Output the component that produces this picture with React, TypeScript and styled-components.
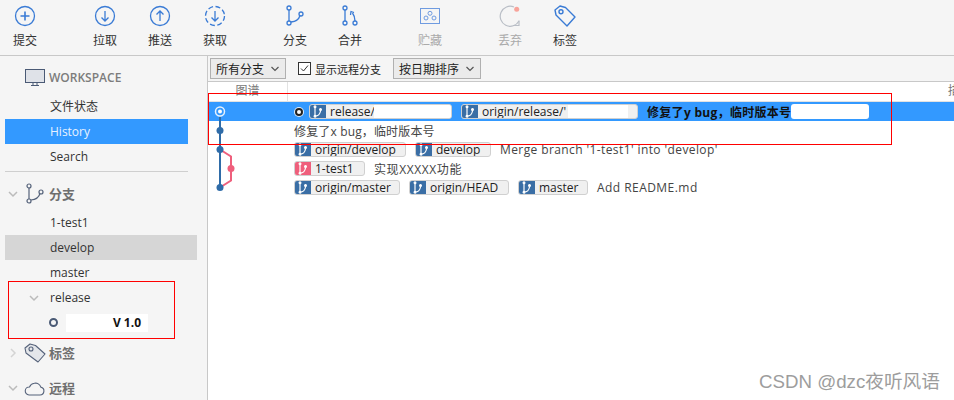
import React from "react";
import styled, { createGlobalStyle } from "styled-components";

const FONT = `"Open Sans", "Noto Sans CJK SC", sans-serif`;
const BLUE = "#3a7bd5";
const LINE = "#2f6ca8";
const PINK = "#ef5f7c";

const GlobalStyle = createGlobalStyle`
  html, body { margin: 0; padding: 0; background: #fff; }
  body { font-family: ${FONT}; font-size: 12px; color: #333; }
`;

const Page = styled.div`
  position: relative;
  width: 954px;
  height: 400px;
  overflow: hidden;
  background: #fff;
`;

const Toolbar = styled.div`
  display: flex;
  height: 55px;
  background: #f5f5f5;
  border-bottom: 1px solid #c8c8c8;
`;

const ToolButton = styled.div<{ $gap: number; $off?: boolean }>`
  display: flex;
  flex-direction: column;
  align-items: center;
  width: 50px;
  height: 55px;
  margin-left: ${(p) => p.$gap}px;
  color: ${(p) => (p.$off ? "#aaa" : "#333")};
  svg { display: block; width: 30px; height: 30px; margin-top: 1px; }
`;

const ToolLabel = styled.span`
  margin-top: 1px;
  line-height: 18px;
`;

const Body = styled.div`
  display: flex;
  height: 344px;
`;

const Sidebar = styled.div`
  width: 208px;
  flex: none;
  box-sizing: border-box;
  background: #f5f5f5;
  border-right: 1px solid #c8c8c8;
  padding: 8px 0 0 5px;
`;

const WorkspaceHead = styled.div`
  display: flex;
  align-items: center;
  height: 26px;
  padding-left: 20px;
  font-weight: 600;
  color: #7c7c7c;
  gap: 4px;
  margin-bottom: 4px;
  svg { width: 20px; height: 20px; }
`;

const SideItem = styled.div<{ $on?: "blue" | "grey" }>`
  height: 25px;
  line-height: 25px;
  padding-left: 45px;
  width: ${(p) => (p.$on === "blue" ? 183 : 192)}px;
  box-sizing: border-box;
  background: ${(p) => (p.$on === "blue" ? "#3399ff" : p.$on === "grey" ? "#d6d6d6" : "transparent")};
  color: ${(p) => (p.$on === "blue" ? "#e8f2ff" : "#333")};
`;

const SideRule = styled.div`
  width: 183px;
  height: 1px;
  margin-top: 2px;
  background: #cfcfcf;
`;

const GroupHead = styled.div<{ $top: number; $bottom?: number }>`
  display: flex;
  align-items: center;
  height: 26px;
  margin-top: ${(p) => p.$top}px;
  margin-bottom: ${(p) => p.$bottom ?? 0}px;
  padding-left: 2px;
  font-size: 13px;
  font-weight: 600;
  color: #6f6f6f;
  svg { flex: none; }
`;

const GroupIcon = styled.svg`
  width: 30px;
  height: 30px;
  margin: -2px 0;
`;

const GroupLabel = styled.span`
  margin: -2px 0 0 -1px;
`;

const Chevron = styled.svg`
  width: 12px;
  height: 12px;
  margin-right: 1px;
`;

const ReleaseItem = styled(SideItem)`
  display: flex;
  align-items: center;
  padding-left: 23px;
`;

const ReleaseChevron = styled(Chevron)`
  margin-right: 10px;
`;

const BranchTip = styled.div`
  display: flex;
  align-items: center;
  height: 25px;
  padding-left: 44px;
`;

const Ring = styled.span`
  width: 5px;
  height: 5px;
  border: 2px solid #4a5a75;
  border-radius: 50%;
  background: #f5f5f5;
`;

const TipName = styled.span`
  display: flex;
  justify-content: flex-end;
  align-items: center;
  width: 82px;
  height: 18px;
  margin-left: 8px;
  background: #fff;
  font-weight: 700;
  color: #111;
  padding-right: 7px;
  box-sizing: border-box;
`;

const Main = styled.div`
  flex: 1;
  min-width: 0;
  background: #fff;
`;

const FilterBar = styled.div`
  display: flex;
  align-items: center;
  height: 25px;
  padding-left: 2px;
  background: #f5f5f5;
  border-bottom: 1px solid #c8c8c8;
`;

const Select = styled.div<{ $w: number; $gap?: number }>`
  display: flex;
  align-items: center;
  justify-content: space-between;
  width: ${(p) => p.$w}px;
  height: 21px;
  margin-left: ${(p) => p.$gap ?? 0}px;
  padding: 0 5px;
  box-sizing: border-box;
  background: #ebebeb;
  border: 1px solid #b0b0b0;
  color: #222;
`;

const Check = styled.span`
  display: flex;
  align-items: center;
  justify-content: center;
  width: 13px;
  height: 13px;
  margin-left: 12px;
  border: 1px solid #333;
  background: #fff;
  box-sizing: border-box;
`;

const CheckLabel = styled.span`
  margin-left: 4px;
  font-size: 11px;
  color: #222;
`;

const TableHead = styled.div`
  display: flex;
  height: 19px;
  line-height: 18px;
  color: #777;
  border-bottom: 1px solid #e2e2e2;
`;

const GraphHead = styled.div`
  width: 79px;
  flex: none;
  text-align: center;
  border-right: 1px solid #e2e2e2;
`;

const DescHead = styled.div`
  flex: 1;
  min-width: 0;
  padding-left: 660px;
  white-space: nowrap;
  overflow: hidden;
`;

const Row = styled.div<{ $sel?: boolean }>`
  display: flex;
  align-items: center;
  height: 19px;
  background: ${(p) => (p.$sel ? "#3399ff" : "transparent")};
`;

const GraphCell = styled.svg`
  flex: none;
  width: 86px;
  height: 19px;
  display: block;
`;

const HeadDot = styled.span`
  width: 4px;
  height: 4px;
  margin: 0 6px 0 1px;
  border: 2.5px solid #222;
  border-radius: 50%;
  background: #fff;
  box-shadow: 0 0 0 1px #dcebfb;
`;

const Pill = styled.span<{ $w: number }>`
  position: relative;
  display: flex;
  align-items: center;
  flex: none;
  width: ${(p) => p.$w}px;
  height: 15px;
  margin-right: 9px;
  box-sizing: border-box;
  background: #f0f0f0;
  border: 1px solid #d0d0d0;
  border-radius: 3px;
  overflow: hidden;
  color: #222;
  white-space: nowrap;
`;

const PillIcon = styled.span<{ $pink?: boolean }>`
  display: flex;
  align-items: center;
  justify-content: center;
  flex: none;
  width: 17px;
  height: 15px;
  margin: 0 4px 0 -1px;
  background: ${(p) => (p.$pink ? PINK : "#3a6ea5")};
`;

const Blot = styled.span<{ $left: number; $w: number }>`
  position: absolute;
  top: 0;
  bottom: 0;
  left: ${(p) => p.$left}px;
  width: ${(p) => p.$w}px;
  background: #fff;
`;

const Subject = styled.span<{ $bold?: boolean; $ls?: number }>`
  white-space: nowrap;
  font-weight: ${(p) => (p.$bold ? 700 : 400)};
  letter-spacing: ${(p) => p.$ls ?? 0}px;
  color: ${(p) => (p.$bold ? "#111" : "#444")};
`;

const SubjectBlot = styled.span`
  width: 78px;
  height: 15px;
  background: #fff;
  border-radius: 3px;
`;

const RedBox = styled.div<{ $x: number; $y: number; $w: number; $h: number }>`
  position: absolute;
  left: ${(p) => p.$x}px;
  top: ${(p) => p.$y}px;
  width: ${(p) => p.$w}px;
  height: ${(p) => p.$h}px;
  box-sizing: border-box;
  border: 1px solid #f00;
  pointer-events: none;
`;

const Watermark = styled.div`
  position: absolute;
  right: 14px;
  bottom: 7px;
  font-family: "Liberation Sans", "Noto Sans CJK SC", sans-serif;
  font-size: 18.7px;
  color: #9d9d9d;
`;

const BranchPaths = () => (
  <>
    <circle cx="9" cy="7" r="2" />
    <circle cx="9" cy="22" r="2" />
    <circle cx="21" cy="13" r="2" />
    <path d="M9 9v11M11 21c5-.5 8-3 9-6.500" />
  </>
);

const PillBranch = () => (
  <svg width="11" height="13" viewBox="0 0 11 13" fill="none" stroke="#fff" strokeWidth="1.2">
    <path d="M3 1.500v10M3 11c3 0 5-2 5.500-5" />
    <circle cx="3" cy="1.800" r="0.900" fill="#fff" />
    <circle cx="3" cy="11.200" r="0.900" fill="#fff" />
    <circle cx="8.500" cy="4.500" r="0.900" fill="#fff" />
  </svg>
);

const Caret = () => (
  <svg width="10" height="6" viewBox="0 0 10 6" fill="none" stroke="#555" strokeWidth="1.2">
    <path d="M1.500 1l3.500 3.500L8.500 1" />
  </svg>
);

const OpenChevron = () => (
  <path d="M2 4l4 4 4-4" />
);

const Tag = ({ name, w, pink, blot }: { name: string; w: number; pink?: boolean; blot?: [number, number] }) => (
  <Pill $w={w}>
    <PillIcon $pink={pink}>
      <PillBranch />
    </PillIcon>
    {name}
    {blot && <Blot $left={blot[0]} $w={blot[1]} />}
  </Pill>
);

const tools = [
  {
    label: "提交",
    gap: 0,
    icon: (
      <svg viewBox="0 0 30 30" fill="none" stroke={BLUE} strokeWidth="1.3">
        <circle cx="15" cy="15" r="9.500" />
        <path d="M15 10.500v9M10.500 15h9" strokeWidth="1.6" />
      </svg>
    ),
  },
  {
    label: "拉取",
    gap: 30,
    icon: (
      <svg viewBox="0 0 30 30" fill="none" stroke={BLUE} strokeWidth="1.3">
        <circle cx="15" cy="15" r="9.500" />
        <path d="M15 10v9.500M11.500 16.500l3.500 3.500 3.500-3.500" />
      </svg>
    ),
  },
  {
    label: "推送",
    gap: 5,
    icon: (
      <svg viewBox="0 0 30 30" fill="none" stroke={BLUE} strokeWidth="1.3">
        <circle cx="15" cy="15" r="9.500" />
        <path d="M15 20v-9.500M11.500 13.500l3.500-3.500 3.500 3.500" />
      </svg>
    ),
  },
  {
    label: "获取",
    gap: 5,
    icon: (
      <svg viewBox="0 0 30 30" fill="none" stroke={BLUE} strokeWidth="1.3">
        <circle cx="15" cy="15" r="9.500" strokeDasharray="5 2.500" />
        <path d="M15 10v9.500M11.500 16.500l3.500 3.500 3.500-3.500" />
      </svg>
    ),
  },
  {
    label: "分支",
    gap: 30,
    icon: (
      <svg viewBox="0 0 30 30" fill="none" stroke={BLUE} strokeWidth="1.3">
        <BranchPaths />
      </svg>
    ),
  },
  {
    label: "合并",
    gap: 5,
    icon: (
      <svg viewBox="0 0 30 30" fill="none" stroke={BLUE} strokeWidth="1.3">
        <circle cx="10" cy="7" r="2" />
        <circle cx="10" cy="22" r="2" />
        <circle cx="20" cy="22" r="2" />
        <path d="M10 9v11M20 20c0-4-1-6-2.500-8M15.500 14l.5-3.500 3 1" />
      </svg>
    ),
  },
  {
    label: "贮藏",
    gap: 30,
    off: true,
    icon: (
      <svg viewBox="0 0 30 30" fill="none" stroke="#6f9be0" strokeWidth="1">
        <rect x="5.500" y="7.500" width="19" height="15" />
        <circle cx="15" cy="12.300" r="2" />
        <circle cx="11" cy="17" r="2" />
        <circle cx="19" cy="17" r="2" />
      </svg>
    ),
  },
  {
    label: "丢弃",
    gap: 30,
    off: true,
    icon: (
      <svg viewBox="0 0 30 30" fill="none" stroke="#b9bec6" strokeWidth="1.2">
        <path d="M19 6a10 10 0 1 0 5 14" />
        <path d="M18 24.500h6v-5" />
        <circle cx="21.700" cy="8.300" r="2.500" fill="#f8a39a" stroke="none" />
      </svg>
    ),
  },
  {
    label: "标签",
    gap: 5,
    icon: (
      <svg viewBox="0 0 30 30" fill="none" stroke={BLUE} strokeWidth="1.4">
        <path d="M5 9l5-4 5.500 1.500L25 16l-8 9L6 14z" strokeLinejoin="round" />
        <circle cx="11" cy="10.700" r="2" />
      </svg>
    ),
  },
];

const App = () => {
  return (
    <Page>
      <GlobalStyle />
      <Toolbar>
        {tools.map((t) => (
          <ToolButton key={t.label} $gap={t.gap} $off={t.off}>
            {t.icon}
            <ToolLabel>{t.label}</ToolLabel>
          </ToolButton>
        ))}
      </Toolbar>
      <Body>
        <Sidebar>
          <WorkspaceHead>
            <svg viewBox="0 0 20 20" fill="#dfe2e8" stroke="#4a5a75" strokeWidth="1">
              <rect x="0.500" y="2.500" width="19" height="13" />
              <path d="M6 18.500h8M8 16v2M12 16v2" fill="none" />
            </svg>
            WORKSPACE
          </WorkspaceHead>
          <SideItem>文件状态</SideItem>
          <SideItem $on="blue">History</SideItem>
          <SideItem>Search</SideItem>
          <SideRule />
          <GroupHead $top={9} $bottom={3}>
            <Chevron viewBox="0 0 12 12" fill="none" stroke="#bbb" strokeWidth="1.5">
              <OpenChevron />
            </Chevron>
            <GroupIcon viewBox="0 0 30 30" fill="none" stroke="#55627a" strokeWidth="1.2">
              <BranchPaths />
            </GroupIcon>
            <GroupLabel>分支</GroupLabel>
          </GroupHead>
          <SideItem>1-test1</SideItem>
          <SideItem $on="grey">develop</SideItem>
          <SideItem>master</SideItem>
          <ReleaseItem>
            <ReleaseChevron viewBox="0 0 12 12" fill="none" stroke="#bbb" strokeWidth="1.5">
              <OpenChevron />
            </ReleaseChevron>
            release
          </ReleaseItem>
          <BranchTip>
            <Ring />
            <TipName>V 1.0</TipName>
          </BranchTip>
          <GroupHead $top={5}>
            <Chevron viewBox="0 0 12 12" fill="none" stroke="#d4d4d4" strokeWidth="1.5">
              <path d="M4 2l4 4-4 4" />
            </Chevron>
            <GroupIcon viewBox="0 0 30 30" fill="#e4e6ea" stroke="#55627a" strokeWidth="1.1">
              <path d="M5 10l5-4 5.500 1.500L25 16l-7 8L6 15z" strokeLinejoin="round" />
              <circle cx="11" cy="11" r="2" />
            </GroupIcon>
            <GroupLabel>标签</GroupLabel>
          </GroupHead>
          <GroupHead $top={9}>
            <Chevron viewBox="0 0 12 12" fill="none" stroke="#bbb" strokeWidth="1.5">
              <OpenChevron />
            </Chevron>
            <GroupIcon viewBox="0 0 30 30" fill="none" stroke="#55627a" strokeWidth="1.1">
              <path d="M9 22h11a4 4 0 0 0 .8-7.900 5.500 5.500 0 0 0-6.500-3.800A6 6 0 0 0 9.500 14 4 4 0 0 0 9 22z" />
            </GroupIcon>
            <GroupLabel>远程</GroupLabel>
          </GroupHead>
        </Sidebar>
        <Main>
          <FilterBar>
            <Select $w={76}>
              所有分支
              <Caret />
            </Select>
            <Check>
              <svg width="11" height="11" viewBox="0 0 11 11" fill="none" stroke="#333" strokeWidth="1">
                <path d="M2 5.500l2.500 2.500 4.500-5.500" />
              </svg>
            </Check>
            <CheckLabel>显示远程分支</CheckLabel>
            <Select $w={88} $gap={12}>
              按日期排序
              <Caret />
            </Select>
          </FilterBar>
          <TableHead>
            <GraphHead>图谱</GraphHead>
            <DescHead>描述</DescHead>
          </TableHead>
          <Row $sel>
            <GraphCell viewBox="0 0 86 19">
              <path d="M12 15v4" stroke={LINE} strokeWidth="2" />
              <circle cx="12" cy="9.500" r="4.500" fill="#3399ff" stroke="#e6f1fc" strokeWidth="1.5" />
              <circle cx="12" cy="9.500" r="2" fill="#fff" />
            </GraphCell>
            <HeadDot />
            <Tag name="release/" w={143} blot={[64, 77]} />
            <Tag name="origin/release/'" w={177} blot={[106, 60]} />
            <Subject $bold $ls={0.3}>修复了y bug，临时版本号</Subject>
            <SubjectBlot />
          </Row>
          <Row>
            <GraphCell viewBox="0 0 86 19">
              <path d="M12 0v19" stroke={LINE} strokeWidth="2" />
              <circle cx="12" cy="9.500" r="3.500" fill={LINE} />
            </GraphCell>
            <Subject $ls={0.15}>修复了x bug，临时版本号</Subject>
          </Row>
          <Row>
            <GraphCell viewBox="0 0 86 19">
              <path d="M12 0v19" stroke={LINE} strokeWidth="2" />
              <path d="M12 9.500l11 7v2.500" stroke={PINK} strokeWidth="2" fill="none" />
              <circle cx="12" cy="9.500" r="3.500" fill={LINE} />
            </GraphCell>
            <Tag name="origin/develop" w={112} />
            <Tag name="develop" w={76} />
            <Subject $ls={0.4}>Merge branch '1-test1' into 'develop'</Subject>
          </Row>
          <Row>
            <GraphCell viewBox="0 0 86 19">
              <path d="M12 0v19" stroke={LINE} strokeWidth="2" />
              <path d="M23 0v19" stroke={PINK} strokeWidth="2" />
              <circle cx="23" cy="9.500" r="3.500" fill={PINK} />
            </GraphCell>
            <Tag name="1-test1" w={71} pink />
            <Subject $ls={0.6}>实现XXXXX功能</Subject>
          </Row>
          <Row>
            <GraphCell viewBox="0 0 86 19">
              <path d="M12 0v9.500" stroke={LINE} strokeWidth="2" />
              <path d="M23 0v2.500l-11 7" stroke={PINK} strokeWidth="2" fill="none" />
              <circle cx="12" cy="9.500" r="3.500" fill={LINE} />
            </GraphCell>
            <Tag name="origin/master" w={106} />
            <Tag name="origin/HEAD" w={100} />
            <Tag name="master" w={70} />
            <Subject $ls={0.45}>Add README.md</Subject>
          </Row>
        </Main>
      </Body>
      <RedBox $x={208} $y={93} $w={684} $h={52} />
      <RedBox $x={8} $y={281} $w={167} $h={58} />
      <Watermark>CSDN @dzc夜听风语</Watermark>
    </Page>
  );
};

export default App;
